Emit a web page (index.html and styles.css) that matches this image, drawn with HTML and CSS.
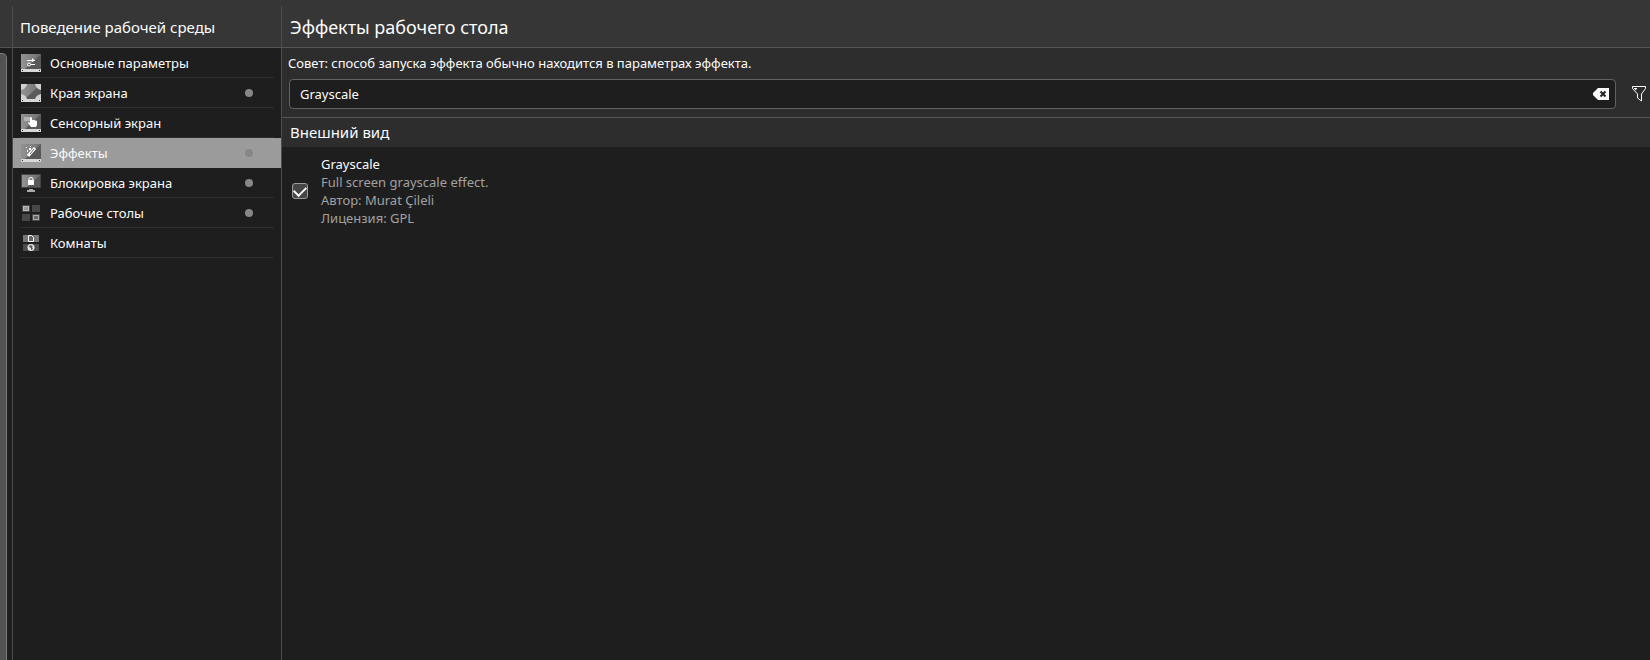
FILE: index.html
```html
<!DOCTYPE html>
<html lang="ru">
<head>
    <meta charset="UTF-8">
    <meta name="viewport" content="width=device-width, initial-scale=1.0">
    <title>Эффекты рабочего стола</title>
    <link rel="stylesheet" href="styles.css">
</head>
<body>
    <!-- Общие части значков -->
    <svg class="defs" width="0" height="0" aria-hidden="true">
        <defs>
            <linearGradient id="shine" x1="0" y1="0" x2="1" y2="0">
                <stop offset="0" stop-color="#939393"/>
                <stop offset="1" stop-color="#707070"/>
            </linearGradient>
            <g id="screen">
                <rect width="20" height="18" fill="#595959"/>
                <path d="M0 0H20L4 15H0Z" fill="url(#shine)"/>
                <rect y="15" width="20" height="3" fill="#d8d8d8"/>
                <rect x="1" y="16" width="1" height="1" fill="#333"/>
                <rect x="18" y="16" width="1" height="1" fill="#333"/>
            </g>
        </defs>
    </svg>

    <div class="window">
        <div class="gutter">
            <div class="gutter-head"></div>
            <div class="scrollbar"></div>
        </div>

        <nav class="sidebar">
            <h2 class="head">Поведение рабочей среды</h2>
            <ul class="menu">
                <li><a href="#general">
                    <svg class="icon" viewBox="0 0 20 18"><use href="#screen"/><path d="M6 6.500H14M6 10.500H14" stroke="#fff"/><path d="M11 4L14 6.500L11 8Z" fill="#fff"/><circle cx="8" cy="10.500" r="1.500" fill="#666" stroke="#fff"/></svg>
                    <span>Основные параметры</span>
                </a></li>
                <li><a href="#edges">
                    <svg class="icon" viewBox="0 0 20 18"><use href="#screen"/><path d="M0 0H6Q5 5 0 6ZM20 0H14Q15 5 20 6ZM0 10Q5 11 6 15H0ZM20 10Q15 11 14 15H20Z" fill="#d0d0d0"/></svg>
                    <span>Края экрана</span><i class="dot"></i>
                </a></li>
                <li><a href="#touch">
                    <svg class="icon" viewBox="0 0 20 18"><use href="#screen"/><rect x="3" y="3" width="7" height="4" fill="#b4b4b4"/><path d="M9 4Q10 2 11 4V6H13L16 7V11L15 13H10L7 9L8 8L9 9Z" fill="#fff"/></svg>
                    <span>Сенсорный экран</span>
                </a></li>
                <li class="active"><a href="#effects">
                    <svg class="icon" viewBox="0 0 20 18"><use href="#screen"/><path d="M7 12L14 4" stroke="#fff" stroke-width="3"/><path d="M9 10L13 5" stroke="#777"/><path d="M5 3H6V4H5ZM8 4H10V6H8ZM9 2H10V3H9ZM6 6H7V8H6Z" fill="#fff"/></svg>
                    <span>Эффекты</span><i class="dot"></i>
                </a></li>
                <li><a href="#lock">
                    <svg class="icon" viewBox="0 0 20 18"><rect width="20" height="14" fill="#444"/><rect x="1" y="1" width="18" height="12" fill="#595959"/><path d="M1 1H19L6 13H1Z" fill="url(#shine)"/><path d="M8 7V5Q8 3.500 10 3.500Q12 3.500 12 5V7" fill="none" stroke="#fff"/><rect x="7" y="6" width="6" height="5" fill="#fff"/><path d="M8 15H12V16H14V18H6V16H8Z" fill="#aaa"/></svg>
                    <span>Блокировка экрана</span><i class="dot"></i>
                </a></li>
                <li><a href="#desktops">
                    <svg class="icon" viewBox="0 0 20 18"><path d="M1 1H9V8H1ZM11 1H19V8H11ZM1 10H9V17H1ZM11 10H19V17H11Z" fill="#484848"/><rect x="2.500" y="2.500" width="5" height="4" fill="#999" stroke="#bbb"/><rect x="12.500" y="11.500" width="5" height="4" fill="#666" stroke="#aaa"/></svg>
                    <span>Рабочие столы</span><i class="dot"></i>
                </a></li>
                <li><a href="#rooms">
                    <svg class="icon" viewBox="0 0 20 18"><rect x="2" y="1" width="16" height="7" fill="#777"/><rect x="2" y="10" width="16" height="7" fill="#4c4c4c"/><path d="M7.500 1.500H10.500L12.500 3.500V7.500H7.500Z" fill="#666" stroke="#fff"/><circle cx="10" cy="13.500" r="3.500" fill="#e6e6e6"/><path d="M9 11L12 12L11 13L12 15L10 16L10 14L8 13Z" fill="#555"/></svg>
                    <span>Комнаты</span>
                </a></li>
            </ul>
        </nav>

        <main class="content">
            <h1 class="head">Эффекты рабочего стола</h1>
            <div class="toolbar">
                <label class="hint" for="search">Совет: способ запуска эффекта обычно находится в параметрах эффекта.</label>
                <div class="search-row">
                    <div class="search">
                        <input type="text" id="search" value="Grayscale">
                        <button type="button" class="clear" aria-label="Очистить">
                            <svg width="16" height="12" viewBox="0 0 16 12"><path d="M5 0H16V12H5L0 7V5Z" fill="#fcfcfc"/><path d="M7.500 3.500L12.500 8.500M12.500 3.500L7.500 8.500" stroke="#222" stroke-width="2"/></svg>
                        </button>
                    </div>
                    <button type="button" class="filter" aria-label="Фильтр">
                        <svg width="14" height="16" viewBox="0 0 14 16"><path d="M0.500 0.500H13.500V2.500L9.500 8V15L5.500 12V8L0.500 2.500Z" fill="none" stroke="#fcfcfc"/><path d="M2 2.500H5L3 4" fill="none" stroke="#fcfcfc"/></svg>
                    </button>
                </div>
            </div>

            <h3 class="section">Внешний вид</h3>
            <div class="effect">
                <input type="checkbox" id="grayscale" checked>
                <label for="grayscale">
                    <span class="name">Grayscale</span>
                    <span>Full screen grayscale effect.</span>
                    <span>Автор: Murat Çileli</span>
                    <span>Лицензия: GPL</span>
                </label>
            </div>
        </main>
    </div>
</body>
</html>
```
FILE: styles.css
```css
* {
    box-sizing: border-box;
}
body {
    margin: 0;
    background: #1e1e1e;
    color: #fcfcfc;
    font-family: "Noto Sans", sans-serif;
    font-size: 13px;
    line-height: 18px;
}
h1, h2, h3, ul {
    margin: 0;
    padding: 0;
    font-weight: 400;
}
button {
    display: flex;
    padding: 0;
    border: none;
    background: none;
    cursor: pointer;
}
.defs {
    position: absolute;
}
.window {
    display: grid;
    grid-template-columns: 12px 269px 1fr;
    min-height: 100vh;
    background: linear-gradient(#363636, #363636) 0 0 / 100% 6px no-repeat;
    padding-top: 6px;
}
.gutter {
    display: flex;
    flex-direction: column;
}
.gutter-head {
    height: 42px;
    background: #363636;
    border-bottom: 1px solid #525252;
}
.scrollbar {
    flex: 1;
    width: 7px;
    margin-top: 5px;
    background: #525252;
    border: 1px solid #7c7c7c;
    border-width: 1px 1px 0 0;
    border-radius: 0 5px 0 0;
}
.sidebar, .content {
    border-left: 1px solid #4c4c4c;
}
.head {
    height: 42px;
    padding-left: 8px;
    background: #363636;
    border-bottom: 1px solid #565656;
    line-height: 42px;
}
h1 {
    font-size: 18px;
}
h2.head {
    padding-left: 7px;
    font-size: 15px;
}

/* Левое меню */
.menu {
    list-style: none;
}
.menu a {
    display: flex;
    align-items: center;
    height: 30px;
    margin: 0 7px;
    padding: 0 21px 0 1px;
    border-bottom: 1px solid #2e2e2e;
    color: inherit;
    text-decoration: none;
}
.menu span {
    flex: 1;
    margin-left: 9px;
}
.icon {
    width: 20px;
    height: 18px;
}
.dot {
    width: 8px;
    height: 8px;
    border-radius: 50%;
    background: #878787;
}
.menu .active {
    background: #9b9b9b;
}
.menu .active a {
    border-color: transparent;
}

/* Поиск */
.toolbar {
    padding: 6px 4px 8px 6px;
    background: #2d2d2d;
    border-bottom: 1px solid #565656;
}
.hint {
    display: block;
}
.search-row {
    display: flex;
    align-items: center;
    gap: 16px;
    margin-top: 7px;
    padding-left: 1px;
}
.search {
    display: flex;
    align-items: center;
    flex: 1;
    height: 30px;
    padding: 0 6px 0 10px;
    background: #1e1e1e;
    border: 1px solid #616161;
    border-radius: 4px;
}
.search input {
    flex: 1;
    min-width: 0;
    padding: 0;
    border: none;
    outline: none;
    background: none;
    color: inherit;
    font: inherit;
}

/* Список эффектов */
.section {
    padding-left: 8px;
    background: #2d2d2d;
    font-size: 15px;
    line-height: 29px;
}
.effect {
    display: flex;
    align-items: center;
    gap: 13px;
    padding: 8px 10px;
}
.effect input {
    appearance: none;
    display: grid;
    place-items: center;
    width: 16px;
    height: 16px;
    margin: 0;
    border: 1px solid #9b9b9b;
    border-radius: 3px;
    background: #464646;
}
.effect input:checked::before {
    content: "";
    width: 10px;
    height: 6px;
    margin-bottom: 2px;
    border: solid #fcfcfc;
    border-width: 0 0 2px 2px;
    transform: rotate(-45deg);
}
.effect span {
    display: block;
    color: #a1a1a1;
}
.effect .name {
    color: #fcfcfc;
}
```
